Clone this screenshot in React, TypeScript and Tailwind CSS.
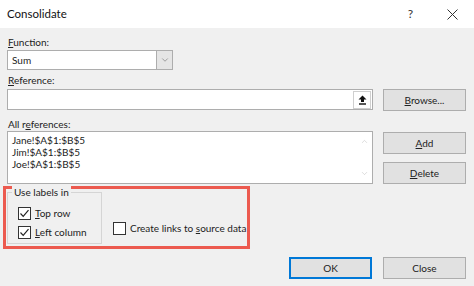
import { ChevronDown, ChevronUp } from 'lucide-react';

const font = { fontFamily: 'Lato, "Noto Sans", sans-serif' };

function Check({ checked }: { checked: boolean }) {
  return (
    <span className="w-[13px] h-[13px] border border-[#333] bg-white flex items-center justify-center shrink-0">
      {checked && (
        <svg width="11" height="11" viewBox="0 0 11 11">
          <path d="M1.5 5.5 L4.2 8.3 L9.5 2.2" fill="none" stroke="#222" strokeWidth="1.2" />
        </svg>
      )}
    </span>
  );
}

function Btn({ children, primary = false }: { children: React.ReactNode; primary?: boolean }) {
  return (
    <button
      className={`w-[83px] h-[22px] bg-[#e1e1e1] text-[10px] text-[#222] flex items-center justify-center ${
        primary ? 'border-2 border-[#0078d7]' : 'border border-[#adadad]'
      }`}
    >
      {children}
    </button>
  );
}

export default function App() {
  return (
    <div className="w-[474px] h-[286px] flex flex-col bg-[#f0f0f0] text-[#222] overflow-hidden whitespace-nowrap" style={font}>
      {/* Title bar */}
      <div className="h-[28px] bg-white flex items-center pl-[7px] pr-[16px] shrink-0">
        <span className="text-[11.5px] text-[#111]">Consolidate</span>
        <span className="ml-auto text-[12px] text-[#333] mr-[34px]">?</span>
        <svg width="11" height="11" viewBox="0 0 11 11">
          <path d="M0.5 0.5 L10.5 10.5 M10.5 0.5 L0.5 10.5" stroke="#333" strokeWidth="1" />
        </svg>
      </div>

      {/* Body */}
      <div className="flex-1 pl-[7px] text-[10px]">
        <div className="mt-[7px] h-[14px] leading-[14px] pl-[1px]">
          <span className="underline">F</span>unction:
        </div>
        <div className="mt-[1px] w-[166px] h-[20px] bg-white border border-[#adadad] flex items-center">
          <span className="pl-[4px] flex-1">Sum</span>
          <span className="w-[16px] h-[18px] bg-[#e5e5e5] border-l border-[#adadad] flex items-center justify-center">
            <ChevronDown size={10} strokeWidth={1.2} color="#555" />
          </span>
        </div>

        <div className="mt-[3px] h-[14px] leading-[14px] pl-[1px]">
          <span className="underline">R</span>eference:
        </div>
        <div className="mt-[2px] flex gap-[10px]">
          <div className="w-[366px] h-[21px] bg-white border border-[#adadad] flex justify-end items-center pr-[1px]">
            <span className="w-[18px] h-[18px] border border-[#cfcfcf] bg-white flex items-center justify-center">
              <svg width="9" height="10" viewBox="0 0 9 10">
                <path d="M4.5 0.5 L8.5 4.5 L6 4.5 L6 7 L3 7 L3 4.5 L0.5 4.5 Z" fill="#111" />
                <rect x="1" y="8.3" width="7" height="1.4" fill="#111" />
              </svg>
            </span>
          </div>
          <Btn>
            <span>
              <span className="underline">B</span>rowse...
            </span>
          </Btn>
        </div>

        <div className="mt-[6px] h-[14px] leading-[14px] pl-[1px]">
          All r<span className="underline">e</span>ferences:
        </div>
        <div className="flex gap-[10px]">
          <div className="w-[366px] h-[53px] bg-white border border-[#adadad] flex">
            <div className="flex-1 pl-[4px] pt-[2px] leading-[12px]">
              <div>Jane!$A$1:$B$5</div>
              <div>Jim!$A$1:$B$5</div>
              <div>Joe!$A$1:$B$5</div>
            </div>
            <div className="w-[16px] flex flex-col justify-between items-center py-[5px]">
              <ChevronUp size={9} strokeWidth={1.2} color="#b5b5b5" />
              <ChevronDown size={9} strokeWidth={1.2} color="#b5b5b5" />
            </div>
          </div>
          <div className="flex flex-col gap-[8px] pt-[1px]">
            <Btn>
              <span>
                <span className="underline">A</span>dd
              </span>
            </Btn>
            <Btn>
              <span>
                <span className="underline">D</span>elete
              </span>
            </Btn>
          </div>
        </div>

        {/* Highlighted options */}
        <div className="mt-[2px] -ml-[4px] w-[247px] h-[63px] border-[3px] border-[#ec5a4f] flex items-end pl-[1px] pb-[2px]">
          <div className="relative w-[95px] h-[52px] border border-[#d5d5d5] pl-[10px] pt-[13px] flex flex-col gap-[5px]">
            <span className="absolute -top-[8px] left-[4px] px-[2px] bg-[#f0f0f0] leading-[14px]">Use labels in</span>
            <label className="flex items-center gap-[4px] h-[14px]">
              <Check checked />
              <span>
                <span className="underline">T</span>op row
              </span>
            </label>
            <label className="flex items-center gap-[4px] h-[14px]">
              <Check checked />
              <span>
                <span className="underline">L</span>eft column
              </span>
            </label>
          </div>
          <label className="ml-[11px] mb-[9px] flex items-center gap-[4px] h-[14px]">
            <Check checked={false} />
            <span>
              Create links to <span className="underline">s</span>ource data
            </span>
          </label>
        </div>

        <div className="mt-[8px] flex justify-end gap-[11px] pr-[8px]">
          <Btn primary>OK</Btn>
          <Btn>Close</Btn>
        </div>
      </div>
    </div>
  );
}
